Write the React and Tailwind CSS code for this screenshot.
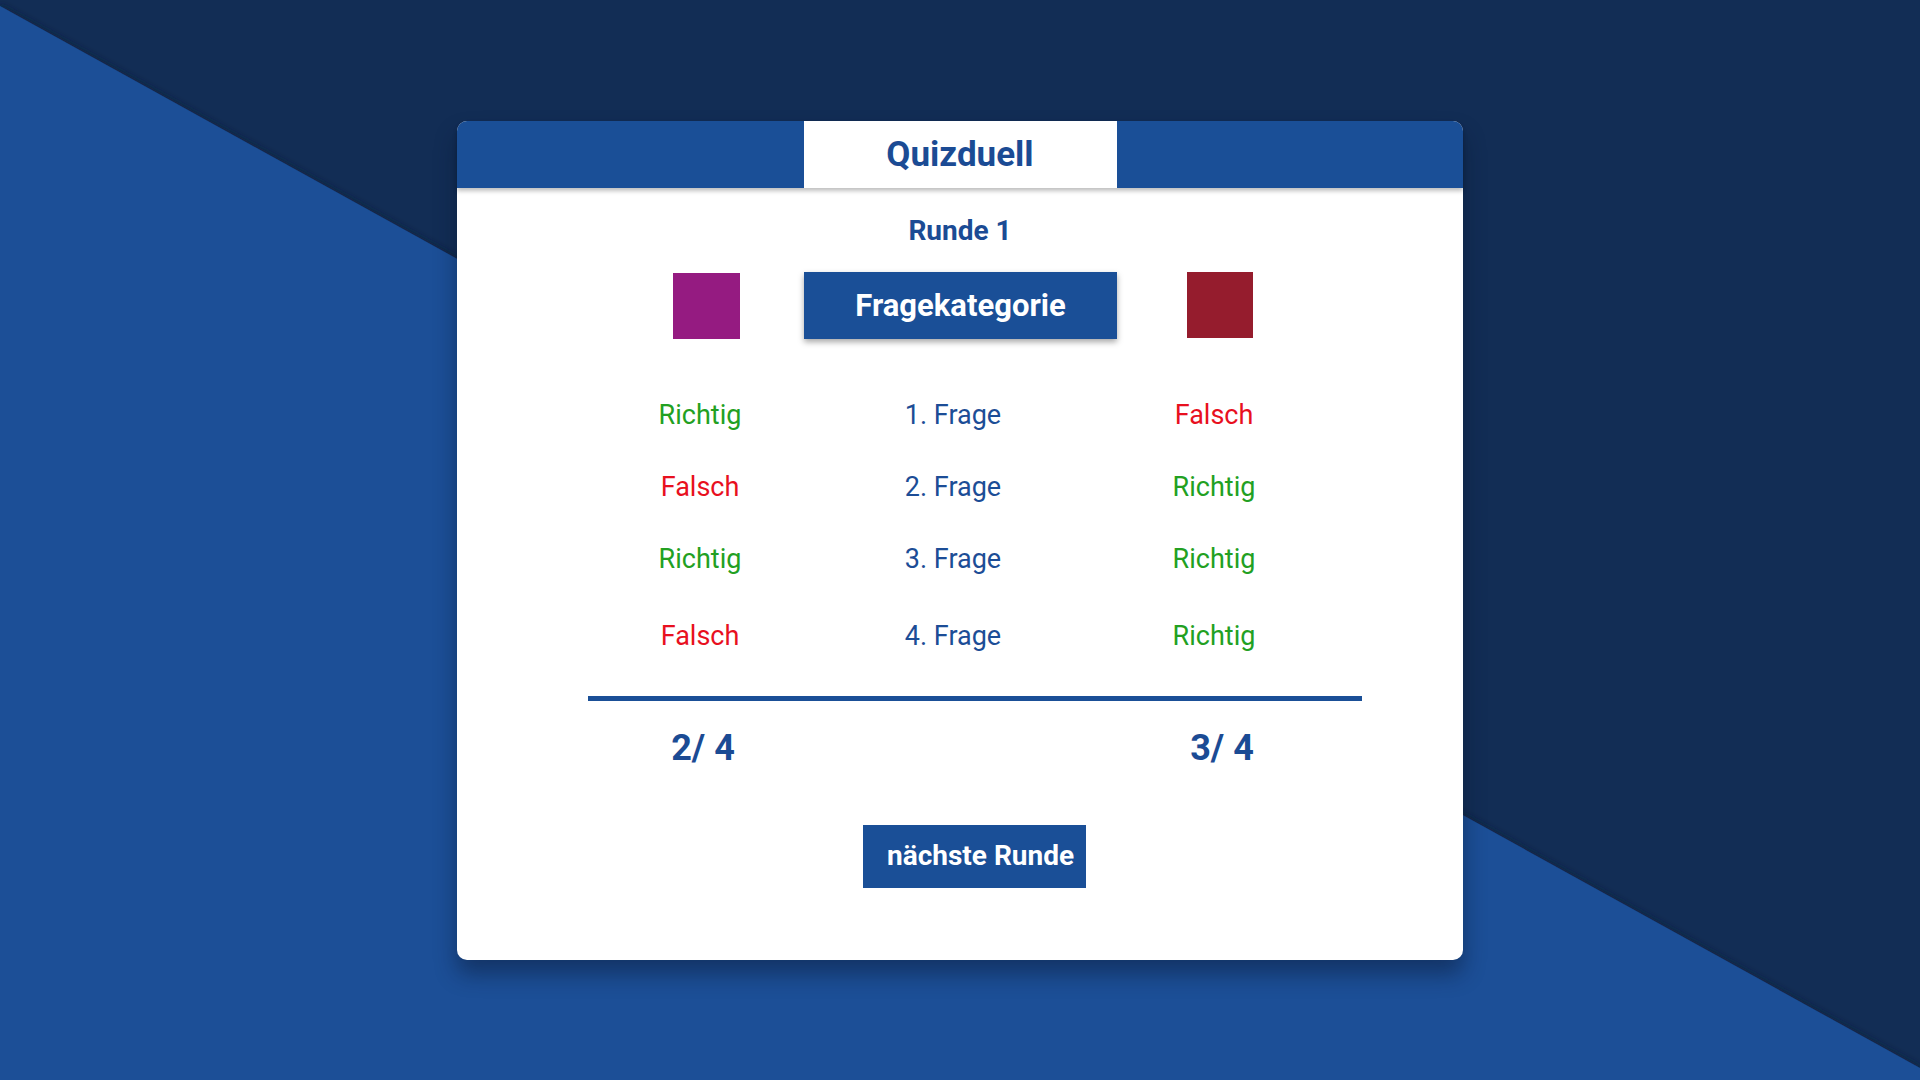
const rows = [
  { left: 'Richtig', right: 'Falsch', mt: '' },
  { left: 'Falsch', right: 'Richtig', mt: '' },
  { left: 'Richtig', right: 'Richtig', mt: '' },
  { left: 'Falsch', right: 'Richtig', mt: 'mt-[5px]' },
]

function Result({ value }) {
  const ok = value === 'Richtig'
  return (
    <span className={ok ? 'text-[#22a022]' : 'text-[#e8101e]'}>{value}</span>
  )
}

export default function App() {
  return (
    <div
      className="relative w-full h-screen overflow-hidden bg-[#122d55] flex items-center justify-center"
      style={{ fontFamily: 'Roboto, "Liberation Sans", sans-serif' }}
    >
      {/* diagonal background */}
      <svg className="absolute inset-0 w-full h-full" viewBox="0 0 1920 1080" preserveAspectRatio="none">
        <defs>
          <filter id="edge" x="-10%" y="-10%" width="120%" height="120%">
            <feDropShadow dx="0" dy="-2" stdDeviation="3" floodColor="#0b1a33" floodOpacity="0.6" />
          </filter>
        </defs>
        <polygon points="0,6 1920,1068 1920,1080 0,1080" fill="#1a4f97" filter="url(#edge)" />
      </svg>

      {/* card */}
      <div className="relative w-[1006px] bg-white rounded-[10px] shadow-[0_14px_22px_rgba(8,20,45,0.45)]">
        {/* header */}
        <div className="relative h-[67px] bg-[#1a4f97] rounded-t-[10px] flex justify-center shadow-[0_3px_4px_rgba(0,0,0,0.25)]">
          <div className="w-[313px] h-full bg-white flex items-center justify-center">
            <span className="text-[35px] font-bold text-[#1b4b94] leading-none">Quizduell</span>
          </div>
        </div>

        {/* round */}
        <div className="mt-[27px] text-center text-[28px] leading-[32px] font-bold text-[#1b4b94]">Runde 1</div>

        {/* category row */}
        <div className="mt-[25px] flex items-start">
          <div className="ml-[216px] mt-[1px] w-[67px] h-[66px] bg-[#951b81]" />
          <div className="ml-[64px] w-[313px] h-[67px] bg-[#1a4f97] flex items-center justify-center shadow-[0_3px_6px_rgba(0,0,0,0.35)]">
            <span className="text-[31px] font-bold text-white leading-none">Fragekategorie</span>
          </div>
          <div className="ml-[70px] w-[66px] h-[66px] bg-[#951c2d]" />
        </div>

        {/* questions */}
        <div className="mt-[41px] ml-[116px]">
          {rows.map((r, i) => (
            <div key={i} className={`grid grid-cols-[254px_252px_270px] h-[72px] items-center text-[27px] leading-none ${r.mt}`}>
              <div className="text-center"><Result value={r.left} /></div>
              <div className="text-center text-[#1c4d96]">{i + 1}. Frage</div>
              <div className="text-center"><Result value={r.right} /></div>
            </div>
          ))}
        </div>

        {/* divider */}
        <div className="mt-[23px] ml-[131px] w-[774px] h-[5px] bg-[#1a4f97]" />

        {/* scores */}
        <div className="mt-[26px] ml-[116px] grid grid-cols-[260px_252px_274px] text-[36px] leading-[42px] font-bold text-[#1b4b94]">
          <div className="text-center">2/ 4</div>
          <div />
          <div className="text-center">3/ 4</div>
        </div>

        {/* next */}
        <div className="mt-[56px] pb-[72px]">
          <button className="ml-[406px] w-[223px] h-[63px] bg-[#1a4f97] text-white font-bold text-[28px] leading-none pl-6 text-left">
            nächste Runde
          </button>
        </div>
      </div>
    </div>
  )
}
